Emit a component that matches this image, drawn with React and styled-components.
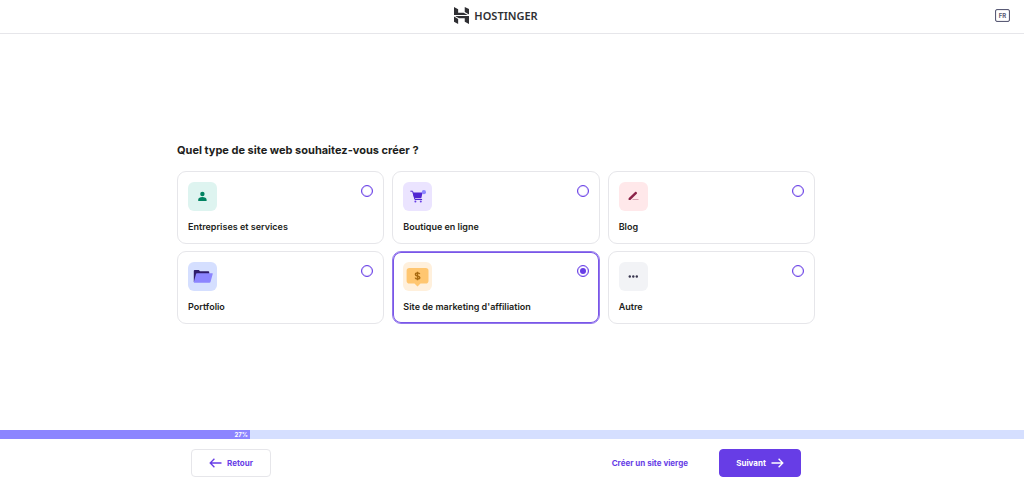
import React, { useState } from "react";
import styled, { createGlobalStyle } from "styled-components";

const color = {
  text: "#1d1e20",
  primary: "#673de6",
  meteorite: "#8c85ff",
  track: "#d5dfff",
  border: "#e6e6ea",
  muted: "#5a5b76",
};

const GlobalStyle = createGlobalStyle`
  *, *::before, *::after { box-sizing: border-box; }
  body {
    margin: 0;
    background: #fff;
    color: ${color.text};
    font-family: "Inter", "Open Sans", sans-serif;
  }
`;

const Page = styled.div`
  display: flex;
  flex-direction: column;
  min-height: 100vh;
`;

const Header = styled.header`
  display: grid;
  grid-template-columns: 1fr auto 1fr;
  align-items: center;
  height: 34px;
  padding: 0 14px 2px;
  border-bottom: 1px solid ${color.border};
`;

const Brand = styled.a`
  grid-column: 2;
  display: flex;
  align-items: center;
  gap: 5px;
  padding-right: 32px;
  color: #2f2f33;
  font-family: "Noto Sans", "Open Sans", sans-serif;
  font-size: 11px;
  font-weight: 600;
  line-height: 16px;
  text-decoration: none;
`;

const Language = styled.button`
  justify-self: end;
  width: 15px;
  height: 13px;
  padding: 0;
  border: 1px solid ${color.muted};
  border-radius: 2px;
  box-shadow: inset 0 0 1px ${color.muted};
  background: none;
  color: ${color.muted};
  font: 700 6px/11px "Inter", sans-serif;
`;

const Main = styled.main`
  flex: 1;
  display: flex;
  align-items: center;
  justify-content: center;
  padding: 16px 32px 16px 0;
`;

const Question = styled.fieldset`
  width: 100%;
  max-width: 638px;
  margin: 0;
  padding: 0;
  border: 0;
`;

const Title = styled.legend`
  padding: 0 0 12px;
  font-size: 11px;
  font-weight: 700;
  line-height: 18px;
`;

const Options = styled.div`
  display: grid;
  grid-template-columns: repeat(3, 1fr);
  gap: 7px 8px;
`;

const Card = styled.label`
  display: grid;
  grid-template-columns: 1fr auto;
  row-gap: 8px;
  padding: 10px 10px 8px;
  border: 1px solid ${color.border};
  border-radius: 9px;
  cursor: pointer;

  &:has(input:checked) {
    border-color: #9278ec;
    box-shadow: inset 0 0 0 1px #7a55e8;
  }
`;

const IconTile = styled.span`
  display: block;
  width: 29px;
  height: 29px;
  border-radius: 6px;
  background: ${(p) => p.$tint};

  svg { display: block; }
`;

const Radio = styled.input`
  appearance: none;
  display: grid;
  place-items: center;
  width: 12px;
  height: 12px;
  margin: 3px 0 0;
  border: 1px solid ${color.primary};
  border-radius: 50%;
  box-shadow: inset 0 0 1px ${color.primary};

  &:checked::before {
    content: "";
    width: 6px;
    height: 6px;
    border-radius: 50%;
    background: ${color.primary};
  }
`;

const CardName = styled.span`
  grid-column: 1 / -1;
  font-size: 9px;
  font-weight: 600;
  line-height: 16px;
`;

const Progress = styled.div`
  height: 9px;
  background: ${color.track};
`;

const ProgressFill = styled.div`
  height: 100%;
  padding-right: 2px;
  background: ${color.meteorite};
  color: #fff;
  font-size: 6px;
  font-weight: 700;
  line-height: 9px;
  text-align: right;
`;

const Footer = styled.footer`
  display: flex;
  justify-content: center;
  padding: 10px 32px 6px 0;
`;

const Actions = styled.div`
  display: flex;
  align-items: center;
  width: 100%;
  max-width: 610px;
`;

const Button = styled.button`
  display: flex;
  align-items: center;
  justify-content: center;
  gap: 5px;
  width: ${(p) => (p.$filled ? "82px" : "80px")};
  height: 28px;
  padding: 0;
  border: 1px solid ${(p) => (p.$filled ? color.primary : color.border)};
  border-radius: 4px;
  background: ${(p) => (p.$filled ? color.primary : "#fff")};
  color: ${(p) => (p.$filled ? "#fff" : color.primary)};
  font: 700 8px/16px "Inter", sans-serif;
  cursor: pointer;
`;

const BlankLink = styled.a`
  margin: 0 31px 0 auto;
  color: ${color.primary};
  font-size: 8px;
  font-weight: 700;
  line-height: 16px;
  text-decoration: none;
`;

const HostingerMark = () => (
  <svg width="15" height="17" viewBox="1.8 0 20.4 24" preserveAspectRatio="none" fill="currentColor" aria-hidden="true">
    <path d="M16.415 0v7.16l5.785 3.384V2.949L16.415 0ZM1.8 0v11.237h18.815L14.89 8.09l-7.457-.004V3.024L1.8 0zm14.615 20.894v-5.019l-7.514-.005c.007.033-5.82-3.197-5.82-3.197l19.119.091V24l-5.785-3.106zM1.8 13.551v7.343l5.633 2.949v-6.988L1.8 13.551z" />
  </svg>
);

const Arrow = ({ back }) => (
  <svg width="13" height="10" viewBox="0 0 13 10" fill="none" stroke="currentColor" strokeWidth="1.3" aria-hidden="true">
    <path d={back ? "M12.5 5H1.2M5.4.8 1.2 5l4.2 4.2" : "M.5 5h11.3M7.6.8 11.8 5 7.6 9.2"} />
  </svg>
);

const Glyph = ({ children }) => (
  <svg width="29" height="29" viewBox="0 0 29 29" aria-hidden="true">
    {children}
  </svg>
);

const options = [
  {
    id: "business",
    name: "Entreprises et services",
    tint: "#def4f0",
    icon: (
      <g fill="#008361">
        <circle cx="14.4" cy="12" r="2.2" />
        <path d="M10.2 18.9v-1.2c0-1.7 1.9-2.6 4.2-2.6s4.2.9 4.2 2.6v1.2z" />
      </g>
    ),
  },
  {
    id: "shop",
    name: "Boutique en ligne",
    tint: "#ebe4ff",
    icon: (
      <>
        <path d="M7.4 9.2h2.2l2.3 8.3h7.2" fill="none" stroke="#5025d1" strokeWidth="1" />
        <path d="M9.8 10.4h9.8l-1.3 5.8h-7z" fill="#5025d1" />
        <circle cx="12.4" cy="19.6" r="1" fill="#673de6" />
        <circle cx="17.8" cy="19.6" r="1" fill="#673de6" />
        <circle cx="20.9" cy="10.2" r="2.1" fill="#8c85ff" />
      </>
    ),
  },
  {
    id: "blog",
    name: "Blog",
    tint: "#ffe8ea",
    icon: (
      <>
        <path d="M13.5 17.5h6" stroke="#d6a2b1" strokeWidth="1" />
        <path d="M9.6 18v-1.8l6.5-6.2c.4-.4.8-.4 1.2 0l.5.5c.4.4.4.8 0 1.2L11.4 18z" fill="#8b2348" />
      </>
    ),
  },
  {
    id: "portfolio",
    name: "Portfolio",
    tint: "#d5dfff",
    icon: (
      <>
        <path d="M5.8 20V8.8c0-.5.3-.8.8-.8h4.2l1.2 1.3h8.4c.5 0 .8.3.8.8V18z" fill="#2f1c6a" />
        <path d="M8.9 11.2h15.2c.5 0 .8.4.6.9l-2.2 7.8c-.1.5-.5.8-1 .8H6.4c-.5 0-.7-.3-.6-.8L8 12c.1-.5.4-.8.9-.8z" fill="#8c85ff" />
      </>
    ),
  },
  {
    id: "affiliate",
    name: "Site de marketing d'affiliation",
    tint: "#fff0dc",
    icon: (
      <>
        <path d="M6.4 6h16.3a2.8 2.8 0 0 1 2.8 2.8v9.9a2.8 2.8 0 0 1-2.8 2.8h-5.2l-3 3-3-3H6.4a2.8 2.8 0 0 1-2.8-2.8V8.8A2.8 2.8 0 0 1 6.4 6z" fill="#ffc670" />
        <path d="M16.7 12.2c-.2-.9-1-1.3-2.2-1.3s-2.1.5-2.1 1.5c0 2.2 4.4.9 4.4 3.2 0 1-.9 1.5-2.2 1.5s-2.2-.5-2.4-1.5M14.5 9.8v8.4" fill="none" stroke="#a86a10" strokeWidth="1.4" />
      </>
    ),
  },
  {
    id: "other",
    name: "Autre",
    tint: "#f2f3f6",
    icon: (
      <g fill="#36344d">
        <circle cx="10.8" cy="14.5" r="1.2" />
        <circle cx="14.3" cy="14.5" r="1.2" />
        <circle cx="17.8" cy="14.5" r="1.2" />
      </g>
    ),
  },
];

export default function App() {
  const [selected, setSelected] = useState("affiliate");
  const progress = { label: "27%", width: "24.4%" };

  return (
    <Page>
      <GlobalStyle />
      <Header>
        <Brand href="#">
          <HostingerMark />
          HOSTINGER
        </Brand>
        <Language type="button">FR</Language>
      </Header>
      <Main>
        <Question>
          <Title>Quel type de site web souhaitez-vous créer ?</Title>
          <Options>
            {options.map((o) => (
              <Card key={o.id} htmlFor={o.id}>
                <IconTile $tint={o.tint}>
                  <Glyph>{o.icon}</Glyph>
                </IconTile>
                <Radio
                  type="radio"
                  name="site-type"
                  id={o.id}
                  checked={selected === o.id}
                  onChange={() => setSelected(o.id)}
                />
                <CardName>{o.name}</CardName>
              </Card>
            ))}
          </Options>
        </Question>
      </Main>
      <Progress>
        <ProgressFill style={{ width: progress.width }}>{progress.label}</ProgressFill>
      </Progress>
      <Footer>
        <Actions>
          <Button type="button">
            <Arrow back />
            Retour
          </Button>
          <BlankLink href="#">Créer un site vierge</BlankLink>
          <Button type="button" $filled>
            Suivant
            <Arrow />
          </Button>
        </Actions>
      </Footer>
    </Page>
  );
}
